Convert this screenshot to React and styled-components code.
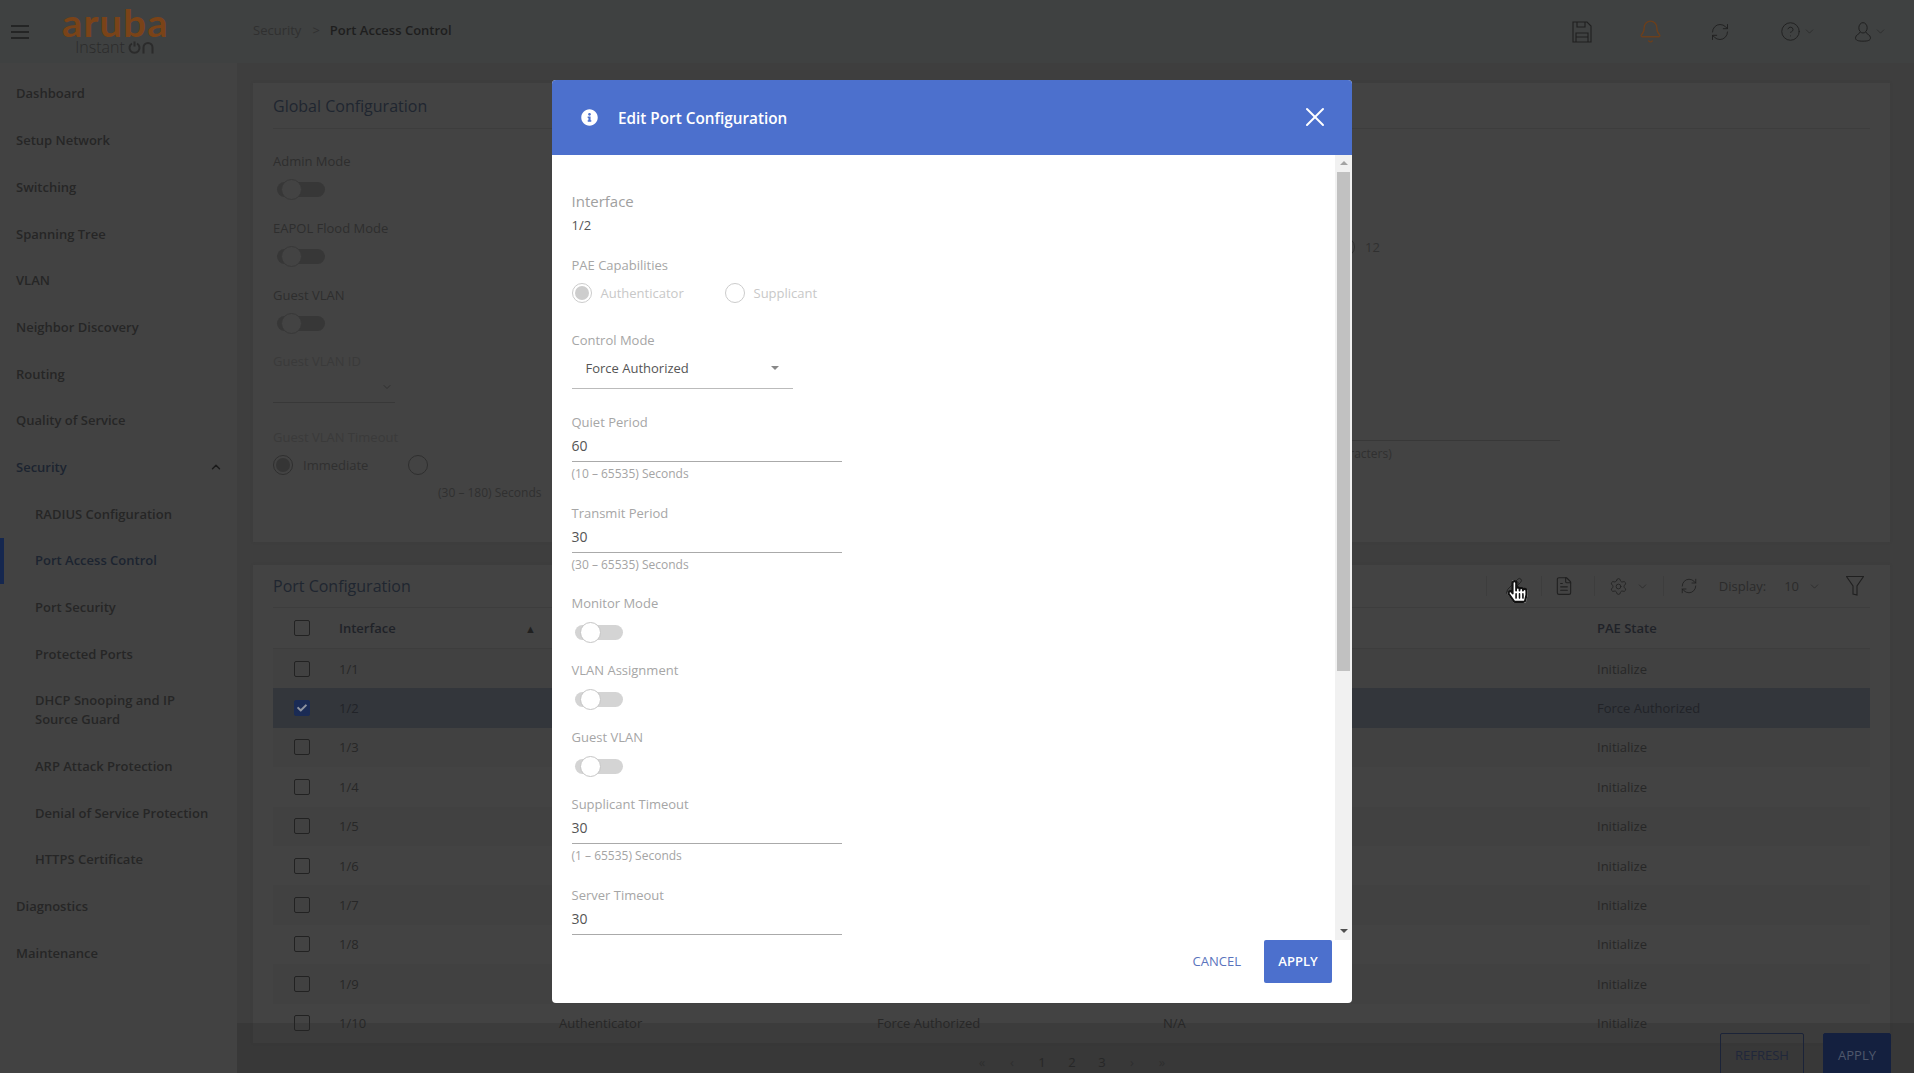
import styled, { createGlobalStyle } from 'styled-components';
import { Bell, ChevronDown, ChevronUp, CircleHelp, FileText, Pencil, RefreshCw, Settings, X } from 'lucide-react';
import { FaCheck, FaHandPointer, FaInfoCircle, FaRegHandPointer } from 'react-icons/fa';

const GlobalStyle = createGlobalStyle`
  * { box-sizing: border-box; }
  html, body { margin: 0; height: 100%; overflow: hidden; }
  body { font-family: 'Open Sans', 'Noto Sans', sans-serif; background: #3e3e3e; }
`;

const NAV = [
  { label: 'Dashboard' },
  { label: 'Setup Network' },
  { label: 'Switching' },
  { label: 'Spanning Tree' },
  { label: 'VLAN' },
  { label: 'Neighbor Discovery' },
  { label: 'Routing' },
  { label: 'Quality of Service' },
  { label: 'Security', open: true },
  { label: 'RADIUS Configuration', sub: true },
  { label: 'Port Access Control', sub: true, active: true },
  { label: 'Port Security', sub: true },
  { label: 'Protected Ports', sub: true },
  { label: 'DHCP Snooping and IP Source Guard', sub: true },
  { label: 'ARP Attack Protection', sub: true },
  { label: 'Denial of Service Protection', sub: true },
  { label: 'HTTPS Certificate', sub: true },
  { label: 'Diagnostics' },
  { label: 'Maintenance' },
];

const PORTS = ['1/1', '1/2', '1/3', '1/4', '1/5', '1/6', '1/7', '1/8', '1/9', '1/10'];

export default function App() {
  return (
    <>
      <GlobalStyle />
      <Page>
        <TopBar>
          <Burger viewBox="0 0 18 14" width="18" height="14">
            <path d="M0 1h18M0 7h18M0 13h18" stroke="#1c1c1c" strokeWidth="1.4" />
          </Burger>
          <Logo>
            <LogoWord>aruba</LogoWord>
            <LogoSub>
              Instant
              <svg width="27" height="13" viewBox="0 0 27 13">
                <path d="M4 2.500a5 5 0 1 0 5 0M6.500 0.500v5" fill="none" stroke="#2b2b2b" strokeWidth="2" />
                <path d="M15.500 12.500v-6a4.500 4.500 0 0 1 9 0v6" fill="none" stroke="#2b2b2b" strokeWidth="2" />
              </svg>
            </LogoSub>
          </Logo>
          <Crumbs>
            <span>Security</span>
            <CrumbSep>&gt;</CrumbSep>
            <CrumbNow>Port Access Control</CrumbNow>
          </Crumbs>
          <TopIcons>
            <TopIcon $w={68}>
              <svg width="20" height="22" viewBox="0 0 20 22" fill="none" stroke="#202020" strokeWidth="1.1">
                <path d="M1 1h14l4 4v16H1z" />
                <path d="M5 1v5h8V1M4 21v-9h12v9M4 16h12" />
              </svg>
            </TopIcon>
            <TopIcon $w={69}>
              <Bell size={25} strokeWidth={1.3} color="#6b3f1c" />
            </TopIcon>
            <TopIcon $w={70}>
              <RefreshCw size={20} strokeWidth={1.1} color="#202020" />
            </TopIcon>
            <TopIcon $w={72} $gap={7}>
              <CircleHelp size={21} strokeWidth={1.1} color="#202020" />
              <ChevronDown size={13} strokeWidth={1.1} color="#222" />
            </TopIcon>
            <TopIcon $w={72}>
              <svg width="18" height="20" viewBox="0 0 20 24" fill="none" stroke="#202020" strokeWidth="1.2">
                <ellipse cx="10" cy="7" rx="5" ry="6.200" />
                <path d="M6.500 12c0 2.500-5.500 3-5.500 7 0 3 3 4 9 4s9-1 9-4c0-4-5.500-4.500-5.500-7" />
              </svg>
              <ChevronDown size={13} strokeWidth={1.1} color="#222" />
            </TopIcon>
          </TopIcons>
        </TopBar>

        <Body>
          <Sidebar>
            {NAV.map((item) => (
              <NavItem key={item.label} $sub={item.sub} $active={item.active}>
                <NavLabel $sub={item.sub} $active={item.active || item.open}>{item.label}</NavLabel>
                {item.open && <ChevronUp size={14} strokeWidth={2.4} color="#1a1a1a" />}
              </NavItem>
            ))}
          </Sidebar>

          <Main>
            <Card $h={459}>
              <CardHead $h={46}>
                <CardTitle>Global Configuration</CardTitle>
              </CardHead>
              <GlobalBody>
                <LeftCol>
                  <DimLabel>Admin Mode</DimLabel>
                  <DimToggle><i /></DimToggle>
                  <DimLabel $top={21}>EAPOL Flood Mode</DimLabel>
                  <DimToggle><i /></DimToggle>
                  <DimLabel $top={21}>Guest VLAN</DimLabel>
                  <DimToggle><i /></DimToggle>
                  <DimLabel $top={20} $faint>Guest VLAN ID</DimLabel>
                  <DimSelect><ChevronDown size={12} color="#303030" /></DimSelect>
                  <DimLabel $top={24} $faint>Guest VLAN Timeout</DimLabel>
                  <DimRadioRow>
                    <DimRadio $on />
                    <DimRadioText>Immediate</DimRadioText>
                    <DimRadio />
                  </DimRadioRow>
                  <DimHint>(30 – 180) Seconds</DimHint>
                </LeftCol>
                <RightCol>
                  <DimRadioRow $top={108} $indent={45}>
                    <DimRadio />
                    <DimRadioText>12</DimRadioText>
                  </DimRadioRow>
                  <DimInputLine />
                  <DimHint $flat>(1 – 32 characters)</DimHint>
                </RightCol>
              </GlobalBody>
            </Card>

            <Card $top={23}>
              <CardHead $h={43}>
                <CardTitle>Port Configuration</CardTitle>
                <Toolbar>
                  <ToolDivider />
                  <ToolSlot $w={54}><Pencil size={18} strokeWidth={1.2} color="#202020" /></ToolSlot>
                  <ToolDivider />
                  <ToolSlot $w={52} $shift={8}><FileText size={20} strokeWidth={1.3} color="#202020" /></ToolSlot>
                  <ToolDivider />
                  <ToolSlot $w={68}>
                    <Settings size={19} strokeWidth={1} color="#202020" />
                    <ChevronDown size={13} strokeWidth={1.1} color="#222" />
                  </ToolSlot>
                  <ToolDivider />
                  <ToolSlot $w={50}><RefreshCw size={18} strokeWidth={1.1} color="#202020" /></ToolSlot>
                  <DisplayText>Display:</DisplayText>
                  <DisplayValue>10</DisplayValue>
                  <ChevronDown size={13} strokeWidth={1.1} color="#222" />
                  <FilterIcon width="18" height="20" viewBox="0 0 18 20" fill="none" stroke="#202020" strokeWidth="1.1">
                    <path d="M.5.500h17L11 10v9l-4-1v-8z" />
                  </FilterIcon>
                </Toolbar>
              </CardHead>
              <Table>
                <TableRow $head>
                  <CheckCell><Check /></CheckCell>
                  <HeadCell>Interface<SortArrow>▲</SortArrow></HeadCell>
                  <HeadCell>PAE Capabilities</HeadCell>
                  <HeadCell>Control Mode</HeadCell>
                  <HeadCell>Operating Control Mode</HeadCell>
                  <HeadCell>PAE State</HeadCell>
                </TableRow>
                {PORTS.map((port, i) => {
                  const selected = port === '1/2';
                  return (
                    <TableRow key={port} $selected={selected} $odd={i % 2 === 0}>
                      <CheckCell>
                        <Check $on={selected}>{selected && <FaCheck size={10} color="#8f94a0" />}</Check>
                      </CheckCell>
                      <Cell $selected={selected}>{port}</Cell>
                      <Cell $selected={selected}>Authenticator</Cell>
                      <Cell $selected={selected}>Force Authorized</Cell>
                      <Cell $selected={selected}>N/A</Cell>
                      <Cell $selected={selected}>{selected ? 'Force Authorized' : 'Initialize'}</Cell>
                    </TableRow>
                  );
                })}
              </Table>
            </Card>
          </Main>
        </Body>

        <Footer>
          <Pager>
            <PageLink $dim>«</PageLink>
            <PageLink $dim>‹</PageLink>
            <PageLink>1</PageLink>
            <PageLink>2</PageLink>
            <PageLink>3</PageLink>
            <PageLink $dim>›</PageLink>
            <PageLink $dim>»</PageLink>
          </Pager>
          <FootButton>REFRESH</FootButton>
          <FootButton $primary>APPLY</FootButton>
        </Footer>

        <Pointer>
          <FaHandPointer size={23} color="#fff" />
          <FaRegHandPointer size={23} color="#111" />
        </Pointer>

        <Modal>
          <ModalHead>
            <FaInfoCircle size={17} color="#fff" />
            <ModalTitle>Edit Port Configuration</ModalTitle>
            <CloseButton><X size={32} strokeWidth={1.500} color="#fff" /></CloseButton>
          </ModalHead>

          <ModalBody>
            <Form>
              <Field $top={36}>
                <Label $big>Interface</Label>
                <Value>1/2</Value>
              </Field>
              <Field>
                <Label>PAE Capabilities</Label>
                <RadioRow>
                  <Radio $on />
                  <RadioText $w={124}>Authenticator</RadioText>
                  <Radio />
                  <RadioText>Supplicant</RadioText>
                </RadioRow>
              </Field>
              <Field $top={27}>
                <Label>Control Mode</Label>
                <Select>
                  Force Authorized
                  <Caret />
                </Select>
              </Field>
              <NumberField label="Quiet Period" value="60" hint="(10 – 65535) Seconds" top={23} />
              <NumberField label="Transmit Period" value="30" hint="(30 – 65535) Seconds" top={21} />
              <ToggleField label="Monitor Mode" />
              <ToggleField label="VLAN Assignment" />
              <ToggleField label="Guest VLAN" />
              <NumberField label="Supplicant Timeout" value="30" hint="(1 – 65535) Seconds" top={20} />
              <NumberField label="Server Timeout" value="30" top={21} />
            </Form>
            <ScrollTrack>
              <ScrollArrow $up />
              <ScrollThumb />
              <ScrollArrow />
            </ScrollTrack>
          </ModalBody>

          <ModalFoot>
            <CancelButton>CANCEL</CancelButton>
            <ApplyButton>APPLY</ApplyButton>
          </ModalFoot>
        </Modal>
      </Page>
    </>
  );
}

function NumberField({ label, value, hint, top }) {
  return (
    <Field $top={top}>
      <Label>{label}</Label>
      <NumberInput>{value}</NumberInput>
      {hint && <Hint>{hint}</Hint>}
    </Field>
  );
}

function ToggleField({ label }) {
  return (
    <Field $top={20}>
      <Label>{label}</Label>
      <Toggle><i /></Toggle>
    </Field>
  );
}

const Page = styled.div`
  position: relative;
  height: 100vh;
  display: flex;
  flex-direction: column;
  overflow: hidden;
`;

const TopBar = styled.header`
  height: 63px;
  flex: none;
  display: flex;
  align-items: center;
  background: #3f4141;
  padding-left: 11px;
`;
const Burger = styled.svg`
  flex: none;
`;
const Logo = styled.div`
  width: 102px;
  margin-left: 35px;
  display: flex;
  flex-direction: column;
  align-items: center;
`;
const LogoWord = styled.div`
  font-family: 'Lato', sans-serif;
  font-size: 38px;
  line-height: 29px;
  height: 31px;
  font-weight: 700;
  letter-spacing: 1px;
  color: #7a4318;
  transform: scaleX(1.06);
`;
const LogoSub = styled.div`
  display: flex;
  align-items: center;
  gap: 3px;
  font-size: 16px;
  line-height: 16px;
  font-weight: 300;
  color: #2b2b2b;
`;
const Crumbs = styled.nav`
  margin-left: 87px;
  padding-bottom: 3px;
  display: flex;
  align-items: center;
  font-size: 13px;
  color: #303030;
`;
const CrumbSep = styled.span`
  margin: 0 10px 0 11px;
`;
const CrumbNow = styled.span`
  font-weight: 600;
  color: #1e1e1e;
`;
const TopIcons = styled.div`
  margin-left: auto;
  display: flex;
  padding-right: 8px;
`;
const TopIcon = styled.div`
  width: ${(p) => p.$w}px;
  margin-left: ${(p) => p.$gap || 0}px;
  display: flex;
  align-items: center;
  justify-content: center;
  gap: 2px;
`;

const Body = styled.div`
  flex: 1;
  display: flex;
  min-height: 0;
`;
const Sidebar = styled.aside`
  width: 237px;
  flex: none;
  padding-top: 7.650px;
  background: #424242;
`;
const NavItem = styled.div`
  display: flex;
  align-items: center;
  justify-content: space-between;
  padding: 13.850px 14px 13.850px ${(p) => (p.$sub ? 35 : 16)}px;
  box-shadow: ${(p) => (p.$active ? 'inset 4px 0 0 #15274f' : 'none')};
`;
const NavLabel = styled.span`
  max-width: 180px;
  font-size: 13px;
  line-height: 19px;
  font-weight: 600;
  color: ${(p) => (p.$active ? '#1c2430' : '#262626')};
`;

const Main = styled.main`
  flex: 1;
  min-width: 0;
  padding: 20px 24px 0 16px;
  background: #3e3e3e;
`;
const Card = styled.section`
  height: ${(p) => (p.$h ? `${p.$h}px` : 'auto')};
  margin-top: ${(p) => p.$top || 0}px;
  padding: 0 20px;
  background: #434343;
  box-shadow: 0 0 2px #3b3b3b;
`;
const CardHead = styled.div`
  height: ${(p) => p.$h}px;
  display: flex;
  align-items: center;
  border-bottom: 1px solid #3d3d3d;
`;
const CardTitle = styled.h2`
  margin: 0;
  font-size: 16px;
  font-weight: 400;
  color: #1f2630;
`;
const GlobalBody = styled.div`
  display: flex;
`;
const LeftCol = styled.div`
  width: 1017px;
  padding-top: 22px;
`;
const RightCol = styled.div`
  width: 270px;
`;
const DimLabel = styled.div`
  margin-top: ${(p) => p.$top || 0}px;
  font-size: 13px;
  line-height: 20px;
  color: ${(p) => (p.$faint ? '#3a3a3a' : '#2e2e2e')};
`;
const DimToggle = styled.div`
  position: relative;
  width: 48px;
  height: 15px;
  margin: 11px 0 0 4px;
  border-radius: 8px;
  background: #373737;

  i {
    position: absolute;
    left: 4px;
    top: -3px;
    width: 21px;
    height: 21px;
    border-radius: 50%;
    background: #434343;
    border: 1px solid #383838;
  }
`;
const DimSelect = styled.div`
  width: 122px;
  height: 32px;
  padding-right: 2px;
  display: flex;
  align-items: center;
  justify-content: flex-end;
  border-bottom: 1px solid #383838;
`;
const DimRadioRow = styled.div`
  display: flex;
  align-items: center;
  gap: 10px;
  margin-top: ${(p) => p.$top ?? 8}px;
  padding-left: ${(p) => p.$indent || 0}px;
`;
const DimRadio = styled.span`
  position: relative;
  width: 20px;
  height: 20px;
  flex: none;
  border-radius: 50%;
  border: 1px solid #2f2f2f;

  &::after {
    content: '';
    display: ${(p) => (p.$on ? 'block' : 'none')};
    position: absolute;
    inset: 2px;
    border-radius: 50%;
    background: #353535;
  }
`;
const DimRadioText = styled.span`
  font-size: 13px;
  color: #303030;
  margin-right: 30px;
`;
const DimHint = styled.div`
  margin: ${(p) => (p.$flat ? '4px 0 0' : '9px 0 0 165px')};
  font-size: 12px;
  color: #303030;
`;
const DimInputLine = styled.div`
  margin-top: 183px;
  border-bottom: 1px solid #383838;
`;

const Toolbar = styled.div`
  margin-left: auto;
  display: flex;
  align-items: center;
  padding-right: 6px;
`;
const ToolDivider = styled.span`
  width: 1px;
  height: 20px;
  background: #3d3d3d;
`;
const ToolSlot = styled.div`
  width: ${(p) => p.$w}px;
  padding-right: ${(p) => p.$shift || 0}px;
  display: flex;
  align-items: center;
  justify-content: center;
  gap: 8px;
`;
const DisplayText = styled.span`
  font-size: 13px;
  color: #2b2b2b;
  margin-left: 5px;
`;
const DisplayValue = styled.span`
  font-size: 13px;
  color: #2b2b2b;
  margin: 0 9px 0 18px;
`;
const FilterIcon = styled.svg`
  margin-left: 25px;
`;

const Table = styled.div`
  display: flex;
  flex-direction: column;
`;
const TableRow = styled.div`
  display: grid;
  grid-template-columns: 66px 220px 318px 286px 434px 1fr;
  align-items: center;
  height: ${(p) => (p.$head ? 41 : 39.400)}px;
  border-bottom: ${(p) => (p.$head ? '1px solid #3d3d3d' : 'none')};
  background: ${(p) => (p.$selected ? '#33363b' : p.$odd ? '#414141' : 'transparent')};
`;
const CheckCell = styled.div`
  padding-left: 21px;
  display: flex;
`;
const Check = styled.span`
  width: 16px;
  height: 16px;
  display: flex;
  align-items: center;
  justify-content: center;
  border-radius: 2px;
  border: 1px solid ${(p) => (p.$on ? '#1a2b55' : '#222')};
  background: ${(p) => (p.$on ? '#1a2b55' : 'transparent')};
`;
const HeadCell = styled.div`
  display: flex;
  justify-content: space-between;
  align-items: center;
  padding-right: 23px;
  font-size: 13px;
  font-weight: 600;
  color: #1f2228;
`;
const SortArrow = styled.span`
  font-size: 11px;
  color: #202020;
`;
const Cell = styled.div`
  font-size: 13px;
  color: ${(p) => (p.$selected ? '#212328' : '#272727')};
`;

const Footer = styled.footer`
  position: absolute;
  left: 237px;
  right: 0;
  bottom: 0;
  height: 50px;
  display: flex;
  align-items: flex-start;
  padding: 10px 23px 0 0;
  background: rgba(40, 40, 40, 0.25);
`;
const Pager = styled.div`
  margin-left: 730px;
  margin-right: auto;
  padding-top: 20px;
  display: flex;
`;
const PageLink = styled.span`
  width: 30px;
  text-align: center;
  font-size: 13px;
  line-height: 18px;
  color: ${(p) => (p.$dim ? '#2e2e2e' : '#272727')};
`;
const FootButton = styled.button`
  height: 46px;
  width: ${(p) => (p.$primary ? 68 : 84)}px;
  margin-left: ${(p) => (p.$primary ? 19 : 0)}px;
  padding: 0 0 3px;
  font: 13px 'Open Sans', sans-serif;
  border-radius: 2px;
  border: 1px solid ${(p) => (p.$primary ? '#14203f' : '#1b2338')};
  background: ${(p) => (p.$primary ? '#14203f' : 'transparent')};
  color: ${(p) => (p.$primary ? '#4f586c' : '#20273b')};
`;

const Pointer = styled.div`
  position: absolute;
  left: 1506px;
  top: 580px;
  width: 20px;
  height: 23px;

  svg {
    position: absolute;
    left: 0;
    top: 0;
  }
`;

const Modal = styled.div`
  position: absolute;
  left: 552px;
  top: 80px;
  width: 800px;
  height: 923px;
  display: flex;
  flex-direction: column;
  overflow: hidden;
  border-radius: 4px;
  background: #fff;
`;
const ModalHead = styled.div`
  height: 75px;
  flex: none;
  display: flex;
  align-items: center;
  padding: 0 21px 0 29px;
  background: #4c70cd;
`;
const ModalTitle = styled.h3`
  margin: 0 0 0 20px;
  font-size: 15.300px;
  font-weight: 600;
  color: #fff;
`;
const CloseButton = styled.div`
  margin: 0 0 1px auto;
  display: flex;
`;
const ModalBody = styled.div`
  flex: 1;
  min-height: 0;
  display: flex;
`;
const Form = styled.div`
  flex: 1;
  min-width: 0;
  overflow: hidden;
  padding-left: 19.500px;
`;
const Field = styled.div`
  margin-top: ${(p) => p.$top ?? 20}px;
`;
const Label = styled.div`
  font-size: ${(p) => (p.$big ? 15 : 13)}px;
  line-height: 20px;
  color: ${(p) => (p.$big ? '#a0a0a0' : '#a6a6a6')};
`;
const Value = styled.div`
  margin-top: 4px;
  font-size: 13px;
  line-height: 20px;
  color: #555;
`;
const RadioRow = styled.div`
  margin-top: 8px;
  display: flex;
  align-items: center;
`;
const Radio = styled.span`
  position: relative;
  width: 20px;
  height: 20px;
  flex: none;
  border-radius: 50%;
  border: 1px solid #ccc;

  &::after {
    content: '';
    display: ${(p) => (p.$on ? 'block' : 'none')};
    position: absolute;
    inset: 2px;
    border-radius: 50%;
    background: #cdcdcd;
  }
`;
const RadioText = styled.span`
  width: ${(p) => (p.$w ? `${p.$w}px` : 'auto')};
  margin-left: 9px;
  font-size: 13px;
  color: #c8c8c8;
`;
const Select = styled.div`
  position: relative;
  width: 221px;
  height: 39px;
  padding: 0 0 3px 14px;
  display: flex;
  align-items: center;
  font-size: 13px;
  color: #555;
  border-bottom: 1px solid #bbb;
`;
const Caret = styled.span`
  position: absolute;
  right: 14px;
  top: 16px;
  border: 4px solid transparent;
  border-top: 4px solid #888;
  border-bottom: 0;
`;
const NumberInput = styled.div`
  width: 270px;
  height: 30px;
  display: flex;
  align-items: center;
  padding-bottom: 2px;
  font-size: 14px;
  color: #555;
  border-bottom: 1px solid #aaa;
`;
const Hint = styled.div`
  margin-top: 4px;
  font-size: 12px;
  line-height: 16px;
  color: #a4a4a4;
`;
const Toggle = styled.div`
  position: relative;
  width: 48px;
  height: 15px;
  margin: 12px 0 0 3px;
  border-radius: 8px;
  background: #d4d4d4;

  i {
    position: absolute;
    left: 5px;
    top: -3px;
    width: 21px;
    height: 21px;
    border-radius: 50%;
    background: #fff;
    border: 1px solid #c6c6c6;
  }
`;
const ScrollTrack = styled.div`
  width: 17px;
  flex: none;
  display: flex;
  flex-direction: column;
  align-items: center;
  background: #f1f1f1;
`;
const ScrollArrow = styled.span`
  margin: ${(p) => (p.$up ? '6px 0 7px' : 'auto 0 7px')};
  border: 4px solid transparent;
  ${(p) => (p.$up ? 'border-bottom: 4px solid #a3a3a3; border-top: 0;' : 'border-top: 4px solid #505050; border-bottom: 0;')}
`;
const ScrollThumb = styled.span`
  width: 13px;
  height: 499px;
  background: #c1c1c1;
`;
const ModalFoot = styled.div`
  height: 63px;
  flex: none;
  display: flex;
  align-items: flex-start;
  justify-content: flex-end;
  padding-right: 20px;
`;
const CancelButton = styled.button`
  height: 43px;
  margin-right: 23px;
  padding: 0 0 2px;
  border: 0;
  background: none;
  font: 13px 'Open Sans', sans-serif;
  color: #5a74bd;
`;
const ApplyButton = styled.button`
  width: 68px;
  height: 43px;
  padding: 0 0 2px;
  border: 0;
  border-radius: 2px;
  background: #4c70cd;
  font: 600 13px 'Open Sans', sans-serif;
  color: #fff;
`;
